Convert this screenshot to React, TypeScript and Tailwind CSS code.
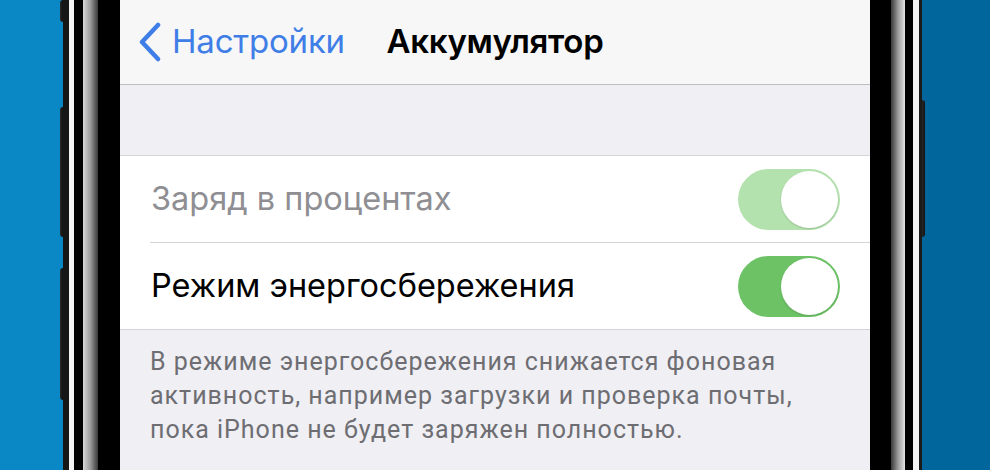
import React from 'react';

const sf = { fontFamily: 'Inter, "Noto Sans", sans-serif' };

function SideButtons({ segments }: { segments: [number, boolean][] }) {
  return (
    <div className="flex flex-col w-[3px]">
      {segments.map(([h, on], i) => (
        <div
          key={i}
          className={on ? 'bg-gradient-to-r from-[#2a2a2a] to-[#111] rounded-l-sm' : ''}
          style={{ height: h }}
        />
      ))}
    </div>
  );
}

function Toggle({ dim }: { dim?: boolean }) {
  return (
    <div
      className={`flex items-center justify-end w-[102px] h-[61px] rounded-full p-[2px] ${
        dim ? 'bg-[#b3e2ae]' : 'bg-[#6cc264]'
      }`}
    >
      <div className="w-[57px] h-[57px] rounded-full bg-white shadow-[0_1px_2px_rgba(0,0,0,0.15)]" />
    </div>
  );
}

export default function App() {
  return (
    <div className="flex w-[990px] h-[470px] overflow-hidden">
      {/* left edge of the phone */}
      <div className="w-[60px] bg-[#0a88c6]" />
      <div className="flex bg-[#0a88c6]">
        <SideButtons segments={[[22, true], [85, false], [130, true], [31, false], [132, true], [70, false]]} />
      </div>
      <div className="w-[6px] bg-[#161616]" />
      <div className="w-[5px] bg-[#f4f4f4]" />
      <div className="w-[9px] bg-black" />
      <div className="w-[15px] bg-gradient-to-r from-[#d8d8d8] via-[#9a9a9a] to-[#3a3a3a]" />
      <div className="w-[22px] bg-black" />

      {/* screen */}
      <div className="w-[750px] flex flex-col bg-[#efeff4]" style={sf}>
        <div className="h-[85px] shrink-0 bg-[#f7f7f8] border-b border-[#bdbdc1] relative flex items-center">
          <div className="flex items-center pl-[17px] text-[#3f7ee6] text-[33px] tracking-[-0.2px]">
            <svg width="26" height="40" viewBox="0 0 26 40" className="mr-[9px]">
              <path d="M21 3 L5 20 L21 37" fill="none" stroke="currentColor" strokeWidth="4.5" strokeLinecap="round" strokeLinejoin="round" />
            </svg>
            <span>Настройки</span>
          </div>
          <div className="absolute inset-x-0 top-0 h-[84px] flex items-center justify-center pointer-events-none">
            <span className="text-[33px] font-semibold text-black tracking-[-0.3px]">Аккумулятор</span>
          </div>
        </div>

        <div className="h-[70px] shrink-0" />

        <div className="bg-white border-y border-[#d5d5d9]">
          <div className="h-[86px] flex items-center justify-between pl-[31px] pr-[30px]">
            <span className="text-[32.5px] text-[#8e8e93]">Заряд в процентах</span>
            <Toggle dim />
          </div>
          <div className="ml-[30px] h-px bg-[#d5d5d9]" />
          <div className="h-[86px] flex items-center justify-between pl-[31px] pr-[30px]">
            <span className="text-[32.5px] text-black">Режим энергосбережения</span>
            <Toggle />
          </div>
        </div>

        <p
          className="pt-[15px] pl-[30px] pr-[60px] text-[25px] leading-[34px] tracking-[1px] text-[#6d6d72]"
          style={{ fontFamily: 'Roboto, "Noto Sans", sans-serif' }}
        >
          В режиме энергосбережения снижается фоновая активность, например загрузки и проверка почты,
          пока iPhone не будет заряжен полностью.
        </p>
      </div>

      {/* right edge of the phone */}
      <div className="w-[21px] bg-black" />
      <div className="w-[14px] bg-gradient-to-r from-[#3a3a3a] via-[#9a9a9a] to-[#e4e4e4]" />
      <div className="w-[8px] bg-black" />
      <div className="w-[6px] bg-[#f4f4f4]" />
      <div className="w-[3px] bg-[#1a1a1a]" />
      <div className="flex bg-[#01669c] [&>div>div]:rounded-l-none [&>div>div]:rounded-r-sm">
        <SideButtons segments={[[100, false], [137, true], [233, false]]} />
      </div>
      <div className="flex-1 bg-[#01669c]" />
    </div>
  );
}
